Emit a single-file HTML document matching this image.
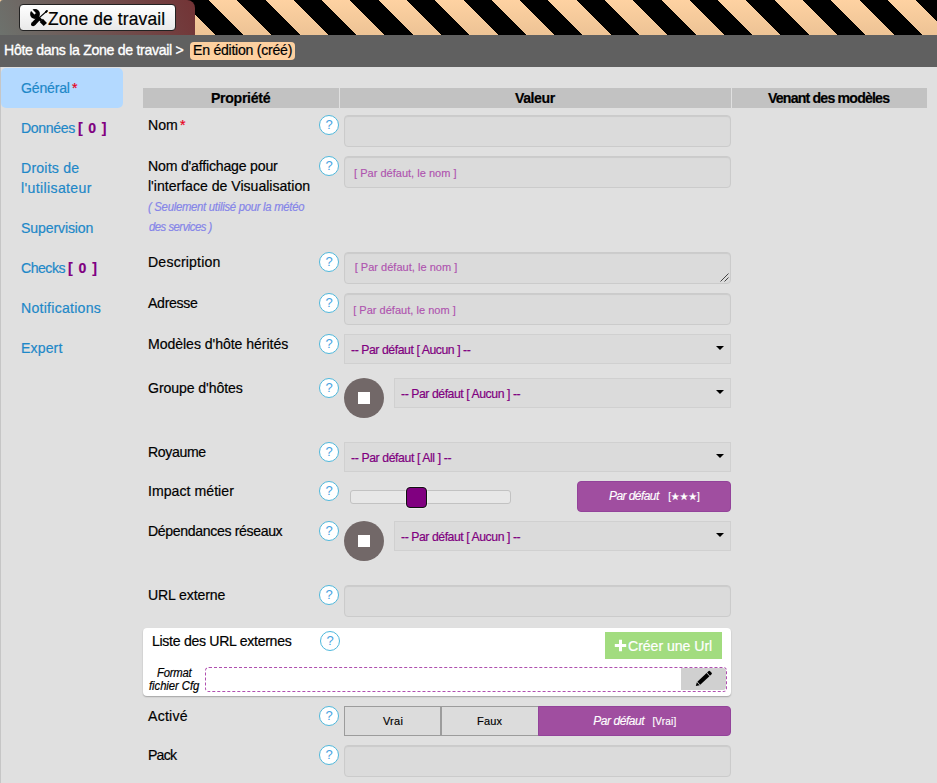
<!DOCTYPE html>
<html lang="fr">
<head>
<meta charset="utf-8">
<title>Hôte dans la Zone de travail</title>
<style>
html,body{margin:0;padding:0;}
body{width:937px;height:783px;overflow:hidden;background:#e0e0e0;position:relative;
  font-family:"Liberation Sans",sans-serif;font-size:15px;color:#000;}
.abs{position:absolute;}
.t{position:absolute;white-space:nowrap;line-height:20px;letter-spacing:0;font-size:15px;transform-origin:0 0;transform:scaleX(0.94);}
.t{-webkit-text-stroke:0.2px;}
.ar{transform:none;-webkit-text-stroke:0.15px;}
#t_crumb{-webkit-text-stroke:0.35px;}
#stripes{left:-11px;top:0;width:948px;height:35px;
  background:
    repeating-linear-gradient(45deg,#000 0,#000 20px,transparent 20px,transparent 40px),
    linear-gradient(to bottom,#fed2a2,#edc395);}
#tab{left:0;top:0;width:195px;height:35px;border-radius:3px 8px 0 0;
  background:linear-gradient(65deg,#6d726d,#733335);}
#zbtn{left:19px;top:4px;width:155px;height:25px;border:1px solid #222;border-radius:4px;
  background:linear-gradient(to bottom,#ffffff,#e9e9e9);}
#crumb{left:0;top:35px;width:937px;height:32px;background:#606060;}
#badge{left:190px;top:42px;width:105px;height:18px;background:#fdd0a0;border-radius:4px;}
#edge{left:0;top:67px;width:1px;height:716px;background:#c6c6c6;}
#active{left:1px;top:68px;width:122px;height:40px;background:#b3d9ff;border-radius:5px;}
.nav{color:#1e88c8;}
.cnt{color:#800080;font-weight:bold;}
.req{color:#e8001c;}
.th{top:88px;height:20px;background:#c2c2c2;}
.hd{font-weight:bold;}
.sub{font-size:12px;font-style:italic;color:#8585e8;}
.fmt{font-size:12px;font-style:italic;line-height:13px;}
.q{width:18px;height:18px;border:1px solid #4fb8dc;border-radius:50%;background:#fff;left:319px;
  color:#4aa3df;font-size:13px;line-height:18px;text-align:center;}
.inp{left:344px;width:385px;height:30px;border:1px solid #cbcbcb;border-radius:4px;background:#dbdbdb;
  box-shadow:inset 0 1px 1px rgba(0,0,0,0.075);}
.ph{font-size:11px;color:#af54af;letter-spacing:0;}
.sel{height:28px;border:1px solid #d0d0d0;background:#dbdbdb;}
.sel i{position:absolute;right:6px;top:11px;width:0;height:0;border-left:4px solid transparent;border-right:4px solid transparent;border-top:4.5px solid #000;}
.opt{font-size:13px;color:#800080;}
.circ{left:344px;width:40px;height:40px;border-radius:50%;background:#726868;}
.circ i{position:absolute;left:14px;top:14px;width:12px;height:12px;background:#fff;}
.pbtn{background:#a04ea0;border:1px solid #93439a;border-radius:4px;}
.pd{font-size:12px;font-style:italic;color:#fff;letter-spacing:-0.2px;}
.br{font-size:10px;color:#fff;letter-spacing:0;}
.st{font-family:"DejaVu Sans",sans-serif;}
.bt{font-size:11px;letter-spacing:0;}
.gbtn{top:706px;height:28px;border:1px solid #9c9c9c;background:#dcdcdc;}
</style>
</head>
<body>
<div id="stripes" class="abs"></div>
<div id="tab" class="abs"></div>
<div id="zbtn" class="abs">
  <svg class="abs" style="left:9px;top:4px" width="21" height="20" viewBox="0 0 21 20">
    <circle cx="6" cy="5" r="4.9" fill="#000"/>
    <path d="M2.2 0.6 L6.6 5.2" stroke="#f8f8f8" stroke-width="2.1" fill="none"/>
    <path d="M6 5 L12.4 11.6" stroke="#000" stroke-width="2.8" fill="none"/>
    <path d="M12.3 11.4 L16.3 15.5" stroke="#000" stroke-width="4.5" fill="none"/>
    <path d="M17.9 2 L10.4 8.7" stroke="#000" stroke-width="1.1" fill="none"/>
    <path d="M17.9 2 L16.9 2.9" stroke="#000" stroke-width="2" stroke-linecap="round" fill="none"/>
    <path d="M9.6 9.5 L4.6 14.7" stroke="#000" stroke-width="4.2" fill="none"/>
    <circle cx="4.1" cy="15.2" r="2.1" fill="#000"/>
  </svg>
</div>
<div id="crumb" class="abs"></div>
<div id="badge" class="abs"></div>
<div id="edge" class="abs"></div>
<div id="active" class="abs"></div>

<div class="abs th" style="left:143px;width:196px"></div>
<div class="abs th" style="left:340px;width:391px"></div>
<div class="abs th" style="left:732px;width:195px"></div>

<div class="abs q" style="top:115px">?</div>
<div class="abs inp" style="top:115px"></div>

<div class="abs q" style="top:156px">?</div>
<div class="abs inp" style="top:156px"></div>

<div class="abs q" style="top:252px">?</div>
<div class="abs inp" style="top:252px">
  <svg class="abs" style="right:1px;bottom:1px" width="10" height="10" viewBox="0 0 10 10"><path d="M1.5 9.5 L9.5 1.5 M5.5 9.5 L9.5 5.5" stroke="#444" stroke-width="1" fill="none"/></svg>
</div>

<div class="abs q" style="top:293px">?</div>
<div class="abs inp" style="top:293px"></div>

<div class="abs q" style="top:334px">?</div>
<div class="abs sel" style="left:344px;top:334px;width:385px"><i></i></div>

<div class="abs q" style="top:378px">?</div>
<div class="abs circ" style="top:378px"><i></i></div>
<div class="abs sel" style="left:394px;top:378px;width:335px"><i></i></div>

<div class="abs q" style="top:442px">?</div>
<div class="abs sel" style="left:344px;top:442px;width:385px"><i></i></div>

<div class="abs q" style="top:481px">?</div>
<div class="abs" style="left:350px;top:490px;width:159px;height:12px;border:1px solid #c2c2c2;border-radius:3px;background:#e7e7e7"></div>
<div class="abs" style="left:406px;top:487px;width:19px;height:19px;border:1px solid #111;border-radius:4px;background:#800080;box-shadow:0 0 0 1px rgba(255,255,255,0.35)"></div>
<div class="abs pbtn" style="left:577px;top:481px;width:152px;height:29px"></div>

<div class="abs q" style="top:521px">?</div>
<div class="abs circ" style="top:521px"><i></i></div>
<div class="abs sel" style="left:394px;top:521px;width:335px"><i></i></div>

<div class="abs q" style="top:585px">?</div>
<div class="abs inp" style="top:585px"></div>

<div class="abs" style="left:143px;top:628px;width:588px;height:68px;background:#fff;border-radius:4px;box-shadow:0 1px 1.5px rgba(0,0,0,0.28)"></div>
<div class="abs q" style="left:320px;top:631px">?</div>
<div class="abs" style="left:605px;top:632px;width:117px;height:27px;background:#a2dc7f;">
  <svg class="abs" style="left:9px;top:7px" width="13" height="13" viewBox="0 0 13 13"><path d="M6.5 0.8 V12.2 M0.8 6.5 H12.2" stroke="#fff" stroke-width="3" fill="none"/></svg>
</div>
<div class="abs" style="left:205px;top:667px;width:520px;height:23px;border:1px dashed #b04fb0;border-radius:4px;"></div>
<div class="abs" style="left:681px;top:668px;width:45px;height:22px;background:#d0d0d0;border-radius:0 3px 3px 0">
  <svg class="abs" style="left:14px;top:2px" width="18" height="18" viewBox="0 0 18 18">
    <g transform="translate(0.8,16) rotate(-43)" fill="#000">
      <path d="M0 0 L3.4 -2.1 L3.4 2.1 Z"/>
      <rect x="4.1" y="-2.1" width="12.6" height="4.2"/>
      <path d="M17.4 -2.1 H19.6 Q20.6 -2.1 20.6 -1.1 V1.1 Q20.6 2.1 19.6 2.1 H17.4 Z"/>
    </g>
  </svg>
</div>

<div class="abs q" style="top:706px">?</div>
<div class="abs gbtn" style="left:344px;width:95px;"></div>
<div class="abs gbtn" style="left:441px;width:96px;"></div>
<div class="abs pbtn" style="left:538px;top:706px;width:191px;height:28px;border-radius:0 4px 4px 0"></div>

<div class="abs q" style="top:745px">?</div>
<div class="abs inp" style="top:745px"></div>

<!-- text layer -->
<div id="t_zone" class="t " style="left:48.0px;top:8px;letter-spacing:0.16px;font-size:18.5px;line-height:22px">Zone de travail</div>
<div id="t_crumb" class="t " style="left:3.5px;top:40px;letter-spacing:-0.32px;color:#fff">Hôte dans la Zone de travail &gt;</div>
<div id="t_badge" class="t " style="left:193.1px;top:40px;letter-spacing:-0.27px;">En édition (créé)</div>
<div id="n_gen" class="t nav" style="left:21.2px;top:78px;letter-spacing:-0.21px;">Général</div>
<div id="n_don" class="t nav" style="left:21.2px;top:118px;letter-spacing:-0.37px;">Données</div>
<div id="n_dro" class="t nav" style="left:21.2px;top:158px;letter-spacing:0.22px;">Droits de</div>
<div id="n_uti" class="t nav" style="left:21.2px;top:178px;letter-spacing:0.38px;">l'utilisateur</div>
<div id="n_sup" class="t nav" style="left:20.5px;top:218px;letter-spacing:-0.14px;">Supervision</div>
<div id="n_chk" class="t nav" style="left:20.5px;top:258px;letter-spacing:-0.53px;">Checks</div>
<div id="n_not" class="t nav" style="left:20.5px;top:298px;letter-spacing:0.27px;">Notifications</div>
<div id="n_exp" class="t nav" style="left:20.5px;top:338px;letter-spacing:0.12px;">Expert</div>
<div id="n_gen_s" class="t req" style="left:72.0px;top:78px;letter-spacing:0px;">*</div>
<div id="n_don_c" class="t cnt" style="left:78.1px;top:118px;letter-spacing:0.93px;">[ 0 ]</div>
<div id="n_chk_c" class="t cnt" style="left:68.1px;top:258px;letter-spacing:1.06px;">[ 0 ]</div>
<div id="h_prop" class="t hd" style="left:211.2px;top:88px;letter-spacing:-0.32px;">Propriété</div>
<div id="h_val" class="t hd" style="left:515.2px;top:88px;letter-spacing:-0.47px;">Valeur</div>
<div id="h_ven" class="t hd" style="left:767.8px;top:88px;letter-spacing:-0.85px;">Venant des modèles</div>
<div id="l_nom" class="t lbl" style="left:148.1px;top:115px;letter-spacing:-0.05px;">Nom</div>
<div id="l_aff1" class="t lbl" style="left:148.1px;top:156px;letter-spacing:-0.2px;">Nom d'affichage pour</div>
<div id="l_aff2" class="t lbl" style="left:148.1px;top:176px;letter-spacing:-0.01px;">l'interface de Visualisation</div>
<div id="l_desc" class="t lbl" style="left:148.0px;top:252px;letter-spacing:0.2px;">Description</div>
<div id="l_adr" class="t lbl" style="left:147.9px;top:293px;letter-spacing:-0.32px;">Adresse</div>
<div id="l_mod" class="t lbl" style="left:148.1px;top:334px;letter-spacing:-0.06px;">Modèles d'hôte hérités</div>
<div id="l_grp" class="t lbl" style="left:147.9px;top:378px;letter-spacing:-0.09px;">Groupe d'hôtes</div>
<div id="l_roy" class="t lbl" style="left:148.1px;top:442px;letter-spacing:-0.39px;">Royaume</div>
<div id="l_imp" class="t lbl" style="left:148.1px;top:481px;letter-spacing:0.04px;">Impact métier</div>
<div id="l_dep" class="t lbl" style="left:148.1px;top:521px;letter-spacing:-0.38px;">Dépendances réseaux</div>
<div id="l_url" class="t lbl" style="left:147.8px;top:585px;letter-spacing:-0.13px;">URL externe</div>
<div id="l_lst" class="t lbl" style="left:152.3px;top:631px;letter-spacing:-0.32px;">Liste des URL externes</div>
<div id="l_act" class="t lbl" style="left:148.2px;top:706px;letter-spacing:0.26px;">Activé</div>
<div id="l_pack" class="t lbl" style="left:147.8px;top:745px;letter-spacing:-0.85px;">Pack</div>
<div id="l_nom_s" class="t req" style="left:180.0px;top:115px;letter-spacing:0px;">*</div>
<div id="s_1" class="t sub" style="left:148.3px;top:197px;letter-spacing:-0.28px;">( Seulement utilisé pour la météo</div>
<div id="s_2" class="t sub" style="left:149.3px;top:217px;letter-spacing:-0.51px;">des services )</div>
<div id="f_1" class="t fmt" style="left:157.2px;top:667px;letter-spacing:-0.21px;">Format</div>
<div id="f_2" class="t fmt" style="left:148.8px;top:680px;letter-spacing:-0.05px;">fichier Cfg</div>
<div id="p_1" class="t ph ar" style="left:354.0px;top:163px;letter-spacing:0.02px;">[ Par défaut, le nom ]</div>
<div id="p_2" class="t ph ar" style="left:354.7px;top:257px;letter-spacing:0.02px;">[ Par défaut, le nom ]</div>
<div id="p_3" class="t ph ar" style="left:353.2px;top:300px;letter-spacing:0.02px;">[ Par défaut, le nom ]</div>
<div id="o_1" class="t opt" style="left:350.8px;top:340px;letter-spacing:-0.45px;">-- Par défaut [ Aucun ] --</div>
<div id="o_2" class="t opt" style="left:400.8px;top:384px;letter-spacing:-0.46px;">-- Par défaut [ Aucun ] --</div>
<div id="o_3" class="t opt" style="left:350.8px;top:448px;letter-spacing:-0.41px;">-- Par défaut [ All ] --</div>
<div id="o_4" class="t opt" style="left:400.8px;top:527px;letter-spacing:-0.46px;">-- Par défaut [ Aucun ] --</div>
<div id="b_pd1" class="t pd ar" style="left:609.0px;top:486px;letter-spacing:-0.57px;">Par défaut</div>
<div id="b_st" class="t br ar" style="left:668.3px;top:487px;letter-spacing:-0.25px;">[<span class="st">★★★</span>]</div>
<div id="b_cr" class="t " style="left:627.8px;top:636px;letter-spacing:-0.04px;color:#fff">Créer une Url</div>
<div id="b_vrai" class="t bt ar" style="left:382.9px;top:711px;letter-spacing:0.27px;">Vrai</div>
<div id="b_faux" class="t bt ar" style="left:477.1px;top:711px;letter-spacing:0.17px;">Faux</div>
<div id="b_pd2" class="t pd ar" style="left:593.2px;top:711px;letter-spacing:-0.43px;">Par défaut</div>
<div id="b_vr" class="t br ar" style="left:652.4px;top:712px;letter-spacing:0.18px;">[Vrai]</div>
</body>
</html>
